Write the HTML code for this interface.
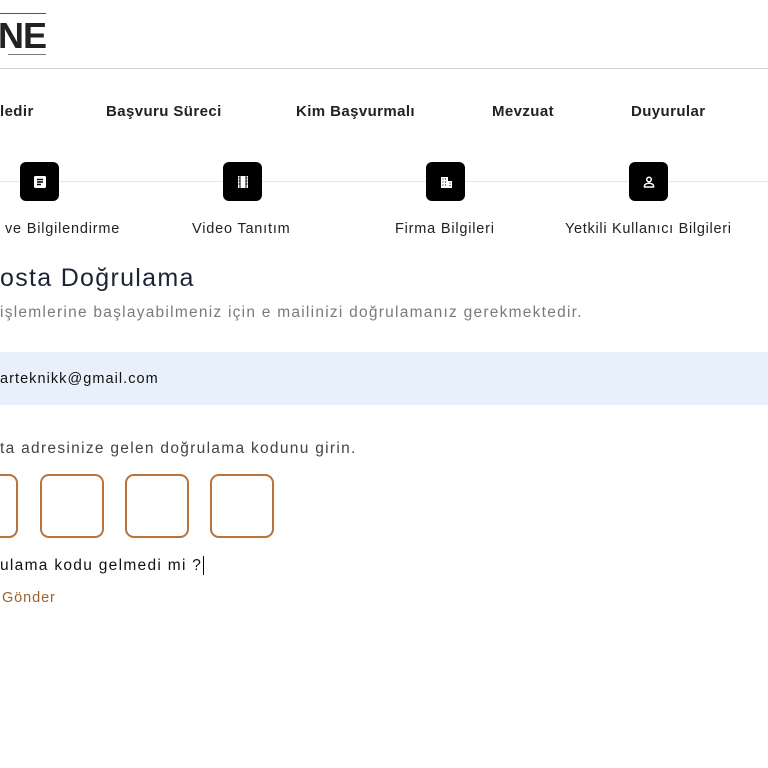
<!DOCTYPE html>
<html><head><meta charset="utf-8"><style>
*{margin:0;padding:0;box-sizing:border-box}
body{width:768px;height:768px;overflow:hidden;background:#fff;font-family:"Liberation Sans",sans-serif;position:relative;color:#111}
.a{position:absolute;white-space:nowrap}
.nav{font-size:15px;font-weight:bold;color:#222;top:103px;letter-spacing:0.4px}
.ic{position:absolute;top:162px;width:39px;height:39px;background:#000;border-radius:6px;display:flex;align-items:center;justify-content:center}
.lb{font-size:14.5px;top:221px;color:#222;letter-spacing:0.8px}
.box{position:absolute;top:474px;width:64px;height:64px;border:2px solid #b8733a;border-radius:9px}
</style></head><body>
<div class="a" style="left:0;top:13px;width:46px;height:1px;background:#555"></div>
<div class="a" style="left:-2px;top:15px;font-size:36px;font-weight:bold;color:#222;letter-spacing:-1px">NE</div>
<div class="a" style="left:8px;top:54px;width:38px;height:1px;background:#777"></div>
<div class="a" style="left:0;top:68px;width:768px;height:1px;background:#d0d0d0"></div>

<div class="a nav" style="left:0">ledir</div>
<div class="a nav" style="left:106px">Başvuru Süreci</div>
<div class="a nav" style="left:296px">Kim Başvurmalı</div>
<div class="a nav" style="left:492px">Mevzuat</div>
<div class="a nav" style="left:631px">Duyurular</div>

<div class="a" style="left:0;top:181px;width:768px;height:1px;background:#e6e6e6"></div>
<div class="ic" style="left:20px"><svg width="16" height="16" viewBox="0 0 16 16"><rect x="2" y="2" width="12" height="12" rx="1.5" fill="#fff"/><path d="M5 5.5h6M5 8h6M5 10.5h4" stroke="#000" stroke-width="1.4"/></svg></div>
<div class="ic" style="left:223px"><svg width="16" height="16" viewBox="0 0 16 16"><rect x="3" y="2" width="10" height="12" fill="#fff"/><path d="M5 2v12M11 2v12" stroke="#000" stroke-width="1"/><path d="M3.5 4h1M3.5 7h1M3.5 10h1M11.5 4h1M11.5 7h1M11.5 10h1" stroke="#000" stroke-width="1"/></svg></div>
<div class="ic" style="left:426px"><svg width="16" height="16" viewBox="0 0 16 16"><rect x="3" y="3" width="7" height="11" fill="#fff"/><rect x="10" y="7" width="4" height="7" fill="#fff"/><path d="M4.5 5h1M7 5h1M4.5 8h1M7 8h1M4.5 11h1M7 11h1M11.5 9h1M11.5 11.5h1" stroke="#000" stroke-width="1"/></svg></div>
<div class="ic" style="left:629px"><svg width="16" height="16" viewBox="0 0 16 16"><circle cx="8" cy="5.5" r="2.3" fill="none" stroke="#fff" stroke-width="1.5"/><path d="M3.5 13v-1.2c0-1.5 2-2.5 4.5-2.5s4.5 1 4.5 2.5V13z" fill="none" stroke="#fff" stroke-width="1.5"/></svg></div>

<div class="a lb" style="left:5px">ve Bilgilendirme</div>
<div class="a lb" style="left:192px">Video Tanıtım</div>
<div class="a lb" style="left:395px">Firma Bilgileri</div>
<div class="a lb" style="left:565px;letter-spacing:0.7px">Yetkili Kullanıcı Bilgileri</div>

<div class="a" style="left:0;top:264px;font-size:25px;color:#1c2434;letter-spacing:1.3px">osta Doğrulama</div>
<div class="a" style="left:0;top:304px;font-size:15.5px;color:#7a7a7a;letter-spacing:1.25px">işlemlerine başlayabilmeniz için e mailinizi doğrulamanız gerekmektedir.</div>

<div class="a" style="left:0;top:352px;width:768px;height:53px;background:#e8f0fb"></div>
<div class="a" style="left:0;top:371px;font-size:14.5px;color:#111;letter-spacing:1.05px">arteknikk@gmail.com</div>

<div class="a" style="left:0;top:440px;font-size:15.5px;color:#444;letter-spacing:1.3px">ta adresinize gelen doğrulama kodunu girin.</div>
<div class="box" style="left:-46px"></div>
<div class="box" style="left:40px"></div>
<div class="box" style="left:125px"></div>
<div class="box" style="left:210px"></div>

<div class="a" style="left:0;top:557px;font-size:15.5px;color:#111;letter-spacing:1.3px">ulama kodu gelmedi mi ?</div>
<div class="a" style="left:203px;top:556px;width:1px;height:19px;background:#000"></div>
<div class="a" style="left:2px;top:590px;font-size:14.5px;color:#a0622b;letter-spacing:0.9px">Gönder</div>
</body></html>
